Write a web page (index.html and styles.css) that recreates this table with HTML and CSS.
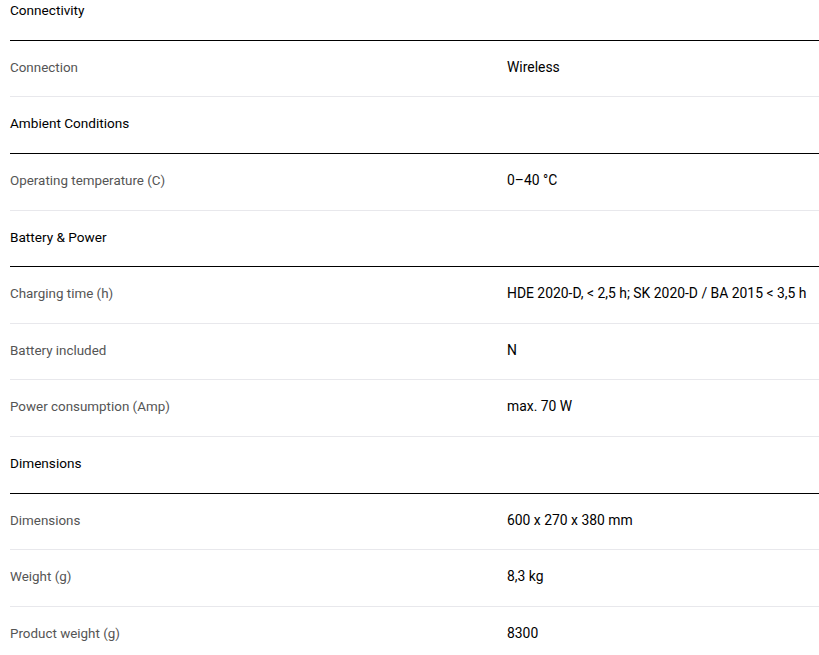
FILE: index.html
```html
<!DOCTYPE html>
<html lang="en">
<head>
<meta charset="utf-8">
<title>Specifications</title>
<link rel="stylesheet" href="styles.css">
</head>
<body>
<div class="specs">
  <div class="group">Connectivity</div>
  <div class="row"><div class="label">Connection</div><div class="value">Wireless</div></div>
  <div class="group">Ambient Conditions</div>
  <div class="row"><div class="label">Operating temperature (C)</div><div class="value">0–40 °C</div></div>
  <div class="group">Battery &amp; Power</div>
  <div class="row"><div class="label">Charging time (h)</div><div class="value">HDE 2020-D, &lt; 2,5 h; SK 2020-D / BA 2015 &lt; 3,5 h</div></div>
  <div class="row"><div class="label">Battery included</div><div class="value">N</div></div>
  <div class="row"><div class="label">Power consumption (Amp)</div><div class="value">max. 70 W</div></div>
  <div class="group">Dimensions</div>
  <div class="row"><div class="label">Dimensions</div><div class="value">600 x 270 x 380 mm</div></div>
  <div class="row"><div class="label">Weight (g)</div><div class="value">8,3 kg</div></div>
  <div class="row"><div class="label">Product weight (g)</div><div class="value">8300</div></div>
</div>
</body>
</html>
```
FILE: styles.css
```css
html, body {
  margin: 0;
  padding: 0;
  background: #fff;
  overflow: hidden;
}
body {
  font-family: Roboto, "Liberation Sans", sans-serif;
  font-size: 14px;
  color: #000;
}
.specs {
  margin-top: -15.8px;
  padding-left: 10px;
}
.group {
  padding: 19px 0 21px;
  line-height: 15.6px;
  font-size: 13.6px;
  border-bottom: 1px solid #000;
  color: #000;
}
.row {
  display: grid;
  grid-template-columns: 497px 1fr;
  padding: 19px 0 21px;
  line-height: 15.6px;
  border-bottom: 1px solid #e8e8ec;
}
.label {
  font-size: 13.4px;
  color: #555;
}
.value {
  font-size: 13.9px;
  color: #000;
}
```
